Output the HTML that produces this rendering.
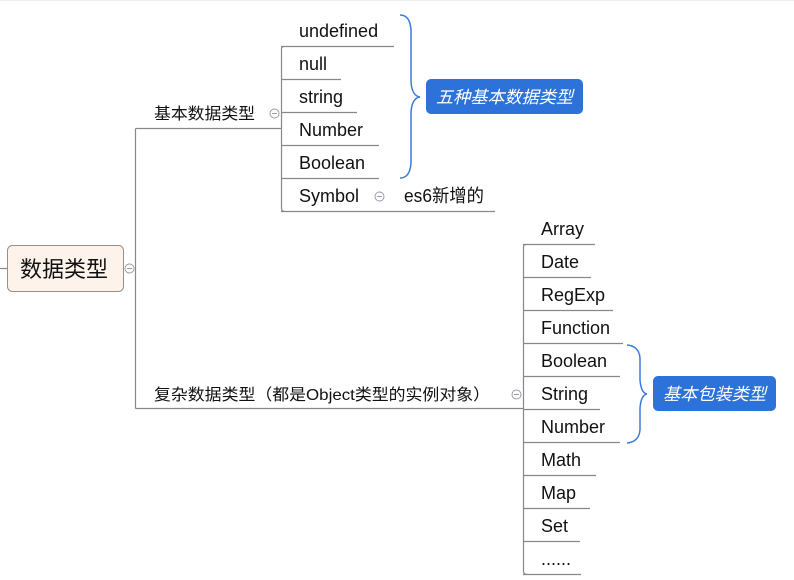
<!DOCTYPE html>
<html><head><meta charset="utf-8"><style>
html,body{margin:0;padding:0;background:#fff;width:794px;height:580px;overflow:hidden}
svg{display:block}
text{font-family:"Liberation Sans","Noto Sans CJK SC",sans-serif;fill:#111}
</style></head><body>
<svg width="794" height="580" viewBox="0 0 794 580">
<line x1="0" y1="0.5" x2="794" y2="0.5" stroke="#eee"/>
<g stroke="#888" stroke-width="1.2" fill="none">
<line x1="0" y1="268.5" x2="8" y2="268.5"/>
<path d="M135.5 128.5 V408.5"/>
<path d="M135.5 128.5 H281.5"/>
<path d="M135.5 408.5 H523.5"/>
<path d="M284 46.5 Q281.5 46.5 281.5 49 V208 Q281.5 211.5 285 211.5"/>
<line x1="281" y1="46.5" x2="394" y2="46.5"/>
<line x1="281" y1="79.5" x2="341" y2="79.5"/>
<line x1="281" y1="112.5" x2="357" y2="112.5"/>
<line x1="281" y1="145.5" x2="379" y2="145.5"/>
<line x1="281" y1="178.5" x2="379" y2="178.5"/>
<line x1="281" y1="211.5" x2="495" y2="211.5"/>
<path d="M526 244.5 Q523.5 244.5 523.5 247 V571 Q523.5 574.5 527 574.5"/>
<line x1="523" y1="244.5" x2="595" y2="244.5"/>
<line x1="523" y1="277.5" x2="591" y2="277.5"/>
<line x1="523" y1="310.5" x2="613" y2="310.5"/>
<line x1="523" y1="343.5" x2="623" y2="343.5"/>
<line x1="523" y1="376.5" x2="620" y2="376.5"/>
<line x1="523" y1="409.5" x2="600" y2="409.5"/>
<line x1="523" y1="442.5" x2="620" y2="442.5"/>
<line x1="523" y1="475.5" x2="596" y2="475.5"/>
<line x1="523" y1="508.5" x2="590" y2="508.5"/>
<line x1="523" y1="541.5" x2="580" y2="541.5"/>
<line x1="523" y1="574.5" x2="581" y2="574.5"/>
</g>
<rect x="7.5" y="245.5" width="116" height="46" rx="5" fill="#fdf3ea" stroke="#9a8f86"/>
<text x="20" y="277" font-size="22" fill="#333">数据类型</text>
<g fill="#fff" stroke="#99a" stroke-width="1">
<circle cx="129.5" cy="268.5" r="4.5"/>
<circle cx="274.5" cy="113.5" r="4.5"/>
<circle cx="379.5" cy="196.5" r="4.5"/>
<circle cx="516.5" cy="394.5" r="4.5"/>
</g>
<g stroke="#99a" stroke-width="1">
<line x1="127" y1="268.5" x2="132" y2="268.5"/>
<line x1="272" y1="113.5" x2="277" y2="113.5"/>
<line x1="377" y1="196.5" x2="382" y2="196.5"/>
<line x1="514" y1="394.5" x2="519" y2="394.5"/>
</g>
<text x="154" y="119" font-size="16" textLength="101" lengthAdjust="spacingAndGlyphs">基本数据类型</text>
<text x="154" y="400" font-size="16" textLength="336" lengthAdjust="spacingAndGlyphs">复杂数据类型（都是Object类型的实例对象）</text>
<g font-size="18">
<text x="299" y="37">undefined</text>
<text x="299" y="70">null</text>
<text x="299" y="103">string</text>
<text x="299" y="136">Number</text>
<text x="299" y="169">Boolean</text>
<text x="299" y="202">Symbol</text>
<text x="404" y="202" textLength="80" lengthAdjust="spacingAndGlyphs">es6新增的</text>
<text x="541" y="235">Array</text>
<text x="541" y="268">Date</text>
<text x="541" y="301">RegExp</text>
<text x="541" y="334">Function</text>
<text x="541" y="367">Boolean</text>
<text x="541" y="400">String</text>
<text x="541" y="433">Number</text>
<text x="541" y="466">Math</text>
<text x="541" y="499">Map</text>
<text x="541" y="532">Set</text>
<text x="541" y="565">......</text>
</g>
<g stroke="#3d7ad8" stroke-width="1.5" fill="none">
<path d="M400 15 Q410 15 411 30 L411 82 Q412 96 420 97 Q412 98 411 112 L411 163 Q410 178 400 178"/>
<path d="M627 345 Q639 346 640 358 L640 380 Q641 393 647 394 Q641 395 640 408 L640 430 Q639 442 627 443"/>
</g>
<rect x="426" y="79" width="157" height="35" rx="5" fill="#2d72d9"/>
<text x="436" y="103" font-size="17" font-style="italic" style="fill:#fff" textLength="137" lengthAdjust="spacingAndGlyphs">五种基本数据类型</text>
<rect x="653" y="376" width="123" height="35" rx="5" fill="#2d72d9"/>
<text x="663" y="400" font-size="17" font-style="italic" style="fill:#fff" textLength="103" lengthAdjust="spacingAndGlyphs">基本包装类型</text>
</svg>
</body></html>
